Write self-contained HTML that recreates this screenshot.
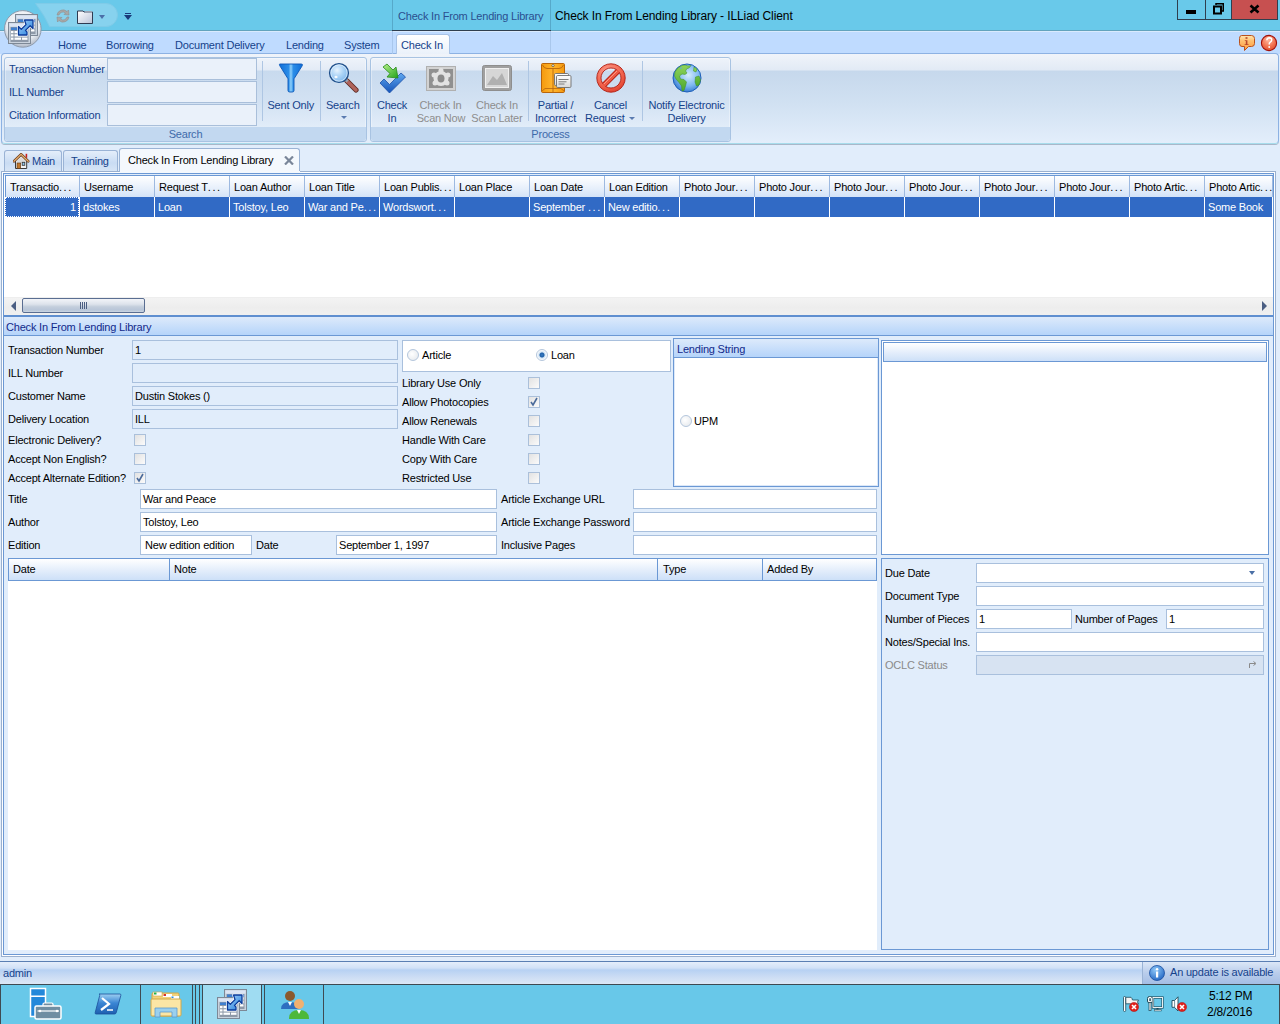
<!DOCTYPE html><html><head><meta charset="utf-8"><style>
*{box-sizing:border-box;margin:0;padding:0}
html,body{width:1280px;height:1024px;overflow:hidden;background:#E1EDFB;font-family:"Liberation Sans",sans-serif;font-size:11px;color:#000}
.a{position:absolute}
.t{position:absolute;white-space:nowrap;letter-spacing:-0.2px;line-height:13px}
.bl{color:#15428B}
.grp{position:absolute;height:85px;border:1px solid #A8C3E2;border-radius:3px;box-shadow:inset 0 0 0 1px rgba(255,255,255,0.35);background:linear-gradient(#EEF3FA 0,#E3EBF6 12px,#C8DAEE 13px,#D3E2F3 45px,#E2EDF9 70px)}
.cap{position:absolute;left:0;right:0;bottom:0;height:14px;background:#C2D8F0;color:#3E6AAA;text-align:center;line-height:15px;border-radius:0 0 3px 3px;letter-spacing:-0.2px}
.sep{position:absolute;width:1px;background:#AEC6E3}
.rin{position:absolute;height:21px;border:1px solid #A9BFDA;background:#EAF1FA}
.big{position:absolute;text-align:center;line-height:13px;color:#15428B;white-space:nowrap;letter-spacing:-0.2px}
.dis{color:#8D8D8D}
.dtab{position:absolute;top:150px;height:21px;border:1px solid #9AB3D5;border-bottom:none;border-radius:3px 3px 0 0;background:linear-gradient(#E4EEFA,#C9DCF3 60%,#D7E5F6)}
.hd{position:absolute;height:21px;border-right:1px solid #9DB9E0;background:linear-gradient(#FFFFFF,#E6EFFB 60%,#D3E3F8)}
.hd span{position:absolute;left:4px;top:5px;white-space:nowrap;letter-spacing:-0.2px;line-height:13px}
.cel{position:absolute;height:20px;border-right:1px solid #fff;background:#316AC5;color:#fff}
.cel span{position:absolute;left:3px;top:4px;white-space:nowrap;letter-spacing:-0.2px;line-height:13px}
.tb{position:absolute;height:20px;border:1px solid #A9C0DD;background:#E1EDFB}
.tw{position:absolute;height:20px;border:1px solid #A9C0DD;background:#fff}
.tb span,.tw span{position:absolute;left:2px;top:3px;white-space:nowrap;letter-spacing:-0.2px;line-height:13px}
.cb{position:absolute;width:12px;height:12px;border:1px solid #ABC0DA;background:linear-gradient(135deg,#E2E2E2,#FBFBFB)}
.rd{position:absolute;width:12px;height:12px;border-radius:50%;border:1px solid #B4C6DC;background:radial-gradient(circle at 40% 40%,#fff,#E2E6EA)}
</style></head><body>
<div class="a" style="left:0px;top:0px;width:1280px;height:31px;background:#69C9EA"></div>
<div class="a" style="left:0px;top:30px;width:1280px;height:1px;background:#62A3BD"></div>
<div class="a" style="left:0px;top:31px;width:1280px;height:23px;background:#BFDBFF"></div>
<div class="a" style="left:0px;top:31px;width:1280px;height:1px;background:#D9EAFD"></div>
<div class="a" style="left:1px;top:53px;width:1278px;height:91px;border:1px solid #8DB2E3;border-bottom-color:#A6DCEB;border-radius:4px;box-shadow:0 1px 0 #A9B7C9;background:linear-gradient(#F0F4FA 0,#E2EAF5 16px,#C6D8EC 17px,#D1E1F2 50px,#E3EEFB 100%)"></div>
<div class="grp" style="left:4px;top:57px;width:363px">
<div class="cap">Search</div></div>
<div class="grp" style="left:370px;top:57px;width:361px">
<div class="cap">Process</div></div>
<div class="a" style="left:1px;top:171px;width:1275px;height:786px;border:1px solid #9AB0CF"></div>
<div class="a" style="left:2px;top:172px;width:1273px;height:784px;border:1px solid #FFFFFF"></div>
<div class="a" style="left:3px;top:173px;width:1271px;height:782px;border:1px solid #6B98D4;background:#E1EDFB"></div>
<div class="a" style="left:4px;top:176px;width:1269px;height:121px;background:#fff"></div>
<div class="a" style="left:5px;top:175px;width:1268px;height:1px;background:#6B98D4"></div>
<div class="a" style="left:5px;top:175px;width:1px;height:22px;background:#6B98D4"></div>
<div class="hd" style="left:6px;top:176px;width:74px"><span>Transactio<i style="font-style:normal;letter-spacing:1.6px">..</i>.</span></div>
<div class="cel" style="left:5px;top:197px;width:74px;border:1px dotted #fff"><span style="left:auto;right:2px;top:3px">1</span></div>
<div class="hd" style="left:80px;top:176px;width:75px"><span>Username</span></div>
<div class="cel" style="left:80px;top:197px;width:75px"><span>dstokes</span></div>
<div class="hd" style="left:155px;top:176px;width:75px"><span>Request T<i style="font-style:normal;letter-spacing:1.6px">..</i>.</span></div>
<div class="cel" style="left:155px;top:197px;width:75px"><span>Loan</span></div>
<div class="hd" style="left:230px;top:176px;width:75px"><span>Loan Author</span></div>
<div class="cel" style="left:230px;top:197px;width:75px"><span>Tolstoy, Leo</span></div>
<div class="hd" style="left:305px;top:176px;width:75px"><span>Loan Title</span></div>
<div class="cel" style="left:305px;top:197px;width:75px"><span>War and Pe<i style="font-style:normal;letter-spacing:1.6px">..</i>.</span></div>
<div class="hd" style="left:380px;top:176px;width:75px"><span>Loan Publis<i style="font-style:normal;letter-spacing:1.6px">..</i>.</span></div>
<div class="cel" style="left:380px;top:197px;width:75px"><span>Wordswort<i style="font-style:normal;letter-spacing:1.6px">..</i>.</span></div>
<div class="hd" style="left:455px;top:176px;width:75px"><span>Loan Place</span></div>
<div class="cel" style="left:455px;top:197px;width:75px"><span></span></div>
<div class="hd" style="left:530px;top:176px;width:75px"><span>Loan Date</span></div>
<div class="cel" style="left:530px;top:197px;width:75px"><span>September <i style="font-style:normal;letter-spacing:1.6px">..</i>.</span></div>
<div class="hd" style="left:605px;top:176px;width:75px"><span>Loan Edition</span></div>
<div class="cel" style="left:605px;top:197px;width:75px"><span>New editio<i style="font-style:normal;letter-spacing:1.6px">..</i>.</span></div>
<div class="hd" style="left:680px;top:176px;width:75px"><span>Photo Jour<i style="font-style:normal;letter-spacing:1.6px">..</i>.</span></div>
<div class="cel" style="left:680px;top:197px;width:75px"><span></span></div>
<div class="hd" style="left:755px;top:176px;width:75px"><span>Photo Jour<i style="font-style:normal;letter-spacing:1.6px">..</i>.</span></div>
<div class="cel" style="left:755px;top:197px;width:75px"><span></span></div>
<div class="hd" style="left:830px;top:176px;width:75px"><span>Photo Jour<i style="font-style:normal;letter-spacing:1.6px">..</i>.</span></div>
<div class="cel" style="left:830px;top:197px;width:75px"><span></span></div>
<div class="hd" style="left:905px;top:176px;width:75px"><span>Photo Jour<i style="font-style:normal;letter-spacing:1.6px">..</i>.</span></div>
<div class="cel" style="left:905px;top:197px;width:75px"><span></span></div>
<div class="hd" style="left:980px;top:176px;width:75px"><span>Photo Jour<i style="font-style:normal;letter-spacing:1.6px">..</i>.</span></div>
<div class="cel" style="left:980px;top:197px;width:75px"><span></span></div>
<div class="hd" style="left:1055px;top:176px;width:75px"><span>Photo Jour<i style="font-style:normal;letter-spacing:1.6px">..</i>.</span></div>
<div class="cel" style="left:1055px;top:197px;width:75px"><span></span></div>
<div class="hd" style="left:1130px;top:176px;width:75px"><span>Photo Artic<i style="font-style:normal;letter-spacing:1.6px">..</i>.</span></div>
<div class="cel" style="left:1130px;top:197px;width:75px"><span></span></div>
<div class="hd" style="left:1205px;top:176px;width:68px"><span>Photo Artic<i style="font-style:normal;letter-spacing:1.6px">..</i>.</span></div>
<div class="cel" style="left:1205px;top:197px;width:68px"><span>Some Book</span></div>
<div class="a" style="left:4px;top:297px;width:1269px;height:18px;background:linear-gradient(#E9E9E9 0,#F3F3F3 1px,#EDEDED 60%,#F0F0F0)"></div>
<div class="a" style="left:22px;top:298px;width:123px;height:15px;border:1px solid #5A6E92;border-radius:2px;background:linear-gradient(#F2F4F8,#DDE3EB 40%,#C3CEDC 60%,#B8C6D8 85%,#CCD6E3)"></div>
<div class="a" style="left:11px;top:301px;width:0;height:0;border-top:5px solid transparent;border-bottom:5px solid transparent;border-right:5px solid #4B5E82"></div>
<div class="a" style="left:1262px;top:301px;width:0;height:0;border-top:5px solid transparent;border-bottom:5px solid transparent;border-left:5px solid #4B5E82"></div>
<div class="a" style="left:80px;top:302px;width:1px;height:7px;background:#4B5E82"></div>
<div class="a" style="left:82px;top:302px;width:1px;height:7px;background:#4B5E82"></div>
<div class="a" style="left:84px;top:302px;width:1px;height:7px;background:#4B5E82"></div>
<div class="a" style="left:86px;top:302px;width:1px;height:7px;background:#4B5E82"></div>
<div class="a" style="left:4px;top:315px;width:1269px;height:2px;background:#5F8FD0"></div>
<div class="a" style="left:4px;top:317px;width:1269px;height:19px;background:linear-gradient(#DDEAFB,#B5D4FA);border-bottom:1px solid #6B98D4"></div>
<div class="t" style="left:6px;top:321px;color:#12298A">Check In From Lending Library</div>
<div class="t" style="left:8px;top:344px;">Transaction Number</div>
<div class="t" style="left:8px;top:367px;">ILL Number</div>
<div class="t" style="left:8px;top:390px;">Customer Name</div>
<div class="t" style="left:8px;top:413px;">Delivery Location</div>
<div class="t" style="left:8px;top:434px;">Electronic Delivery?</div>
<div class="t" style="left:8px;top:453px;">Accept Non English?</div>
<div class="t" style="left:8px;top:472px;">Accept Alternate Edition?</div>
<div class="t" style="left:8px;top:493px;">Title</div>
<div class="t" style="left:8px;top:516px;">Author</div>
<div class="t" style="left:8px;top:539px;">Edition</div>
<div class="tb" style="left:132px;top:340px;width:266px"><span>1</span></div>
<div class="tb" style="left:132px;top:363px;width:266px"><span></span></div>
<div class="tb" style="left:132px;top:386px;width:266px"><span>Dustin Stokes ()</span></div>
<div class="tb" style="left:132px;top:409px;width:266px"><span>ILL</span></div>
<div class="cb" style="left:134px;top:434px"></div>
<div class="cb" style="left:134px;top:453px"></div>
<div class="cb" style="left:134px;top:472px"><svg width="10" height="10" style="position:absolute;left:0;top:0"><path d="M2 5 L4 8 L8 1" stroke="#4A6A9A" stroke-width="1.6" fill="none"/></svg></div>
<div class="a" style="left:402px;top:340px;width:269px;height:32px;border:1px solid #A9C0DD;background:#fff"></div>
<div class="rd" style="left:407px;top:349px"></div>
<div class="t" style="left:422px;top:349px;">Article</div>
<div class="rd" style="left:536px;top:349px;background:radial-gradient(circle,#3B7FC4 0,#1E5FA8 2px,#CFE2F3 3px,#fff 5px)"></div>
<div class="t" style="left:551px;top:349px;">Loan</div>
<div class="t" style="left:402px;top:377px;">Library Use Only</div>
<div class="cb" style="left:528px;top:377px"></div>
<div class="t" style="left:402px;top:396px;">Allow Photocopies</div>
<div class="cb" style="left:528px;top:396px"><svg width="10" height="10" style="position:absolute;left:0;top:0"><path d="M2 5 L4 8 L8 1" stroke="#4A6A9A" stroke-width="1.6" fill="none"/></svg></div>
<div class="t" style="left:402px;top:415px;">Allow Renewals</div>
<div class="cb" style="left:528px;top:415px"></div>
<div class="t" style="left:402px;top:434px;">Handle With Care</div>
<div class="cb" style="left:528px;top:434px"></div>
<div class="t" style="left:402px;top:453px;">Copy With Care</div>
<div class="cb" style="left:528px;top:453px"></div>
<div class="t" style="left:402px;top:472px;">Restricted Use</div>
<div class="cb" style="left:528px;top:472px"></div>
<div class="tw" style="left:140px;top:489px;width:357px"><span>War and Peace</span></div>
<div class="tw" style="left:140px;top:512px;width:357px"><span>Tolstoy, Leo</span></div>
<div class="tw" style="left:140px;top:535px;width:112px"><span style="left:4px">New edition edition</span></div>
<div class="t" style="left:256px;top:539px;">Date</div>
<div class="tw" style="left:336px;top:535px;width:161px"><span>September 1, 1997</span></div>
<div class="t" style="left:501px;top:493px;">Article Exchange URL</div>
<div class="t" style="left:501px;top:516px;">Article Exchange Password</div>
<div class="t" style="left:501px;top:539px;">Inclusive Pages</div>
<div class="tw" style="left:633px;top:489px;width:244px"></div>
<div class="tw" style="left:633px;top:512px;width:244px"></div>
<div class="tw" style="left:633px;top:535px;width:244px"></div>
<div class="a" style="left:673px;top:338px;width:206px;height:149px;border:1px solid #6B98D4;background:#fff"></div>
<div class="a" style="left:674px;top:339px;width:204px;height:19px;background:linear-gradient(#DDEAFB,#B5D4FA);border-bottom:1px solid #6B98D4"></div>
<div class="t" style="left:677px;top:343px;color:#12298A">Lending String</div>
<div class="a" style="left:674px;top:358px;width:204px;height:128px;border:1px solid #DCE8F8;border-top:none"></div>
<div class="rd" style="left:680px;top:415px"></div>
<div class="t" style="left:694px;top:415px;">UPM</div>
<div class="a" style="left:881px;top:340px;width:388px;height:215px;border:1px solid #6B98D4;background:#fff"></div>
<div class="a" style="left:883px;top:342px;width:384px;height:20px;border:1px solid #6B98D4;background:linear-gradient(#FFFFFF,#E3EDFB 55%,#CDE0F8)"></div>
<div class="a" style="left:881px;top:558px;width:388px;height:392px;border:1px solid #6B98D4;background:#E1EDFB"></div>
<div class="t" style="left:885px;top:567px;">Due Date</div>
<div class="t" style="left:885px;top:590px;">Document Type</div>
<div class="t" style="left:885px;top:613px;">Number of Pieces</div>
<div class="t" style="left:1075px;top:613px;">Number of Pages</div>
<div class="t" style="left:885px;top:636px;">Notes/Special Ins.</div>
<div class="t" style="left:885px;top:659px;color:#8A8A8A">OCLC Status</div>
<div class="tw" style="left:976px;top:563px;width:288px"></div>
<div class="a" style="left:1249px;top:571px;width:0;height:0;border-left:3.5px solid transparent;border-right:3.5px solid transparent;border-top:4px solid #4A6FA5"></div>
<div class="tw" style="left:976px;top:586px;width:288px"></div>
<div class="tw" style="left:976px;top:609px;width:96px"><span>1</span></div>
<div class="tw" style="left:1166px;top:609px;width:98px"><span>1</span></div>
<div class="tw" style="left:976px;top:632px;width:288px"></div>
<div class="tw" style="left:976px;top:655px;width:288px;background:#D7E3F2"></div>
<svg class="a" style="left:1248px;top:659px" width="10" height="10" viewBox="0 0 10 10"><path d="M1.5 9 V4.5 H7" stroke="#8A8A8A" stroke-width="1" fill="none"/><path d="M5.5 2.5 L8 4.5 L5.5 6.5" stroke="#8A8A8A" stroke-width="1" fill="none"/></svg>
<div class="a" style="left:8px;top:558px;width:869px;height:392px;background:#fff"></div>
<div class="a" style="left:8px;top:558px;width:869px;height:23px;border:1px solid #6B98D4;background:linear-gradient(#FFFFFF,#E3EDFB 55%,#CDE0F8)"></div>
<div class="a" style="left:169px;top:559px;width:1px;height:21px;background:#6B98D4"></div>
<div class="a" style="left:657px;top:559px;width:1px;height:21px;background:#6B98D4"></div>
<div class="a" style="left:762px;top:559px;width:1px;height:21px;background:#6B98D4"></div>
<div class="t" style="left:13px;top:563px;">Date</div>
<div class="t" style="left:174px;top:563px;">Note</div>
<div class="t" style="left:663px;top:563px;">Type</div>
<div class="t" style="left:767px;top:563px;">Added By</div>
<div class="a" style="left:392px;top:0px;width:159px;height:31px;border-left:1px solid #56A9CA;border-right:1px solid #56A9CA"></div>
<div class="a" style="left:392px;top:30px;width:159px;height:1px;background:#2F3F4F"></div>
<div class="t" style="left:398px;top:10px;color:#2B4F8F">Check In From Lending Library</div>
<div class="t" style="left:555px;top:10px;font-size:12px;letter-spacing:-0.1px;color:#000">Check In From Lending Library - ILLiad Client</div>
<div class="a" style="left:392px;top:31px;width:1px;height:23px;background:#A9C7EC"></div>
<div class="a" style="left:550px;top:31px;width:1px;height:23px;background:#A9C7EC"></div>
<div class="a" style="left:1177px;top:0px;width:101px;height:20px;border:1px solid #2F3F4F;border-top:none;background:#69C9EA"></div>
<div class="a" style="left:1231px;top:0px;width:47px;height:20px;border:1px solid #2F3F4F;border-top:none;background:#C75050"></div>
<div class="a" style="left:1205px;top:0px;width:1px;height:20px;background:#2F3F4F"></div>
<svg class="a" style="left:1177px;top:0px" width="101" height="20" viewBox="0 0 101 20"><rect x="9" y="10" width="10" height="4" fill="#000"/><path d="M39 5 V3.75 H46.25 V11 H45" stroke="#000" stroke-width="1.5" fill="none"/><rect x="37" y="6.5" width="7" height="7" stroke="#000" stroke-width="2" fill="none"/><path d="M73.5 5.5 L81.5 12.5 M81.5 5.5 L73.5 12.5" stroke="#000" stroke-width="2.6"/></svg>
<svg class="a" style="left:30px;top:2px" width="92" height="27" viewBox="0 0 92 27"><path d="M5.5 1.5 H76 A11.5 11.5 0 0 1 76 24.5 H19.5 Q15 14 5.5 1.5 Z" fill="#87D2EE" stroke="#7FCBE8" stroke-width="1"/></svg>
<svg class="a" style="left:0px;top:6px" width="48" height="44" viewBox="0 0 48 44"><defs><linearGradient id="ag" x1="0" y1="0" x2="1" y2="1"><stop offset="0" stop-color="#A8D4FA"/><stop offset="1" stop-color="#1F7BDB"/></linearGradient><radialGradient id="abg" cx="0.5" cy="0.35" r="0.65"><stop offset="0" stop-color="#FFFFFF"/><stop offset="0.7" stop-color="#E6EAF0"/><stop offset="1" stop-color="#AFB8C6"/></radialGradient></defs><circle cx="22.8" cy="22.9" r="18.3" fill="url(#abg)" stroke="#8E9AAB" stroke-width="1"/><g transform="translate(0,0) scale(1.0)"><rect x="15.5" y="8.5" width="22" height="21" fill="#C9D2DD" stroke="#7D8896"/><rect x="16.5" y="9.5" width="20" height="3" fill="#DCE5F5"/><rect x="17.5" y="13" width="18" height="15" fill="#8E99A8"/><rect x="18" y="13.5" width="17" height="2.5" fill="#3E7FD0"/><path d="M18.5 17.5h16M18.5 21h16M18.5 24.5h16" stroke="#fff" stroke-width="2.2"/><rect x="8.5" y="16.5" width="22" height="21" fill="#C9D2DD" stroke="#7D8896"/><rect x="9.5" y="17.5" width="20" height="3" fill="#DCE5F5"/><rect x="10.5" y="21" width="18" height="15" fill="#8E99A8"/><rect x="11" y="21.5" width="17" height="2.5" fill="#3E7FD0"/><g fill="#fff"><rect x="11" y="25" width="2.5" height="2.2"/><rect x="14.5" y="25" width="13" height="2.2"/><rect x="11" y="28.3" width="2.5" height="2.2"/><rect x="14.5" y="28.3" width="13" height="2.2"/><rect x="11" y="31.6" width="2.5" height="2.2"/><rect x="14.5" y="31.6" width="6.5" height="2.2"/><rect x="22" y="31.6" width="5.5" height="2.2"/></g><path id="arw" d="M24.5 14 H33 V22.5 L30.2 19.7 L25.5 24.4 L27 26 V29 H18.5 V20.5 L21.3 23.3 L26 18.6 Z" fill="#fff" stroke="#fff" stroke-width="2.6" stroke-linejoin="round"/><path d="M24.5 14 H33 V22.5 L30.2 19.7 L25.5 24.4 L27 26 V29 H18.5 V20.5 L21.3 23.3 L26 18.6 Z" fill="url(#ag)" stroke="#0A3A9A" stroke-width="1.3" stroke-linejoin="round"/></g></svg>
<svg class="a" style="left:55px;top:8px" width="16" height="16" viewBox="0 0 16 16"><path d="M2 7 A6 6 0 0 1 12 3.5 L13.5 2 L14 7 L9 6.5 L10.5 5 A4 4 0 0 0 4 7 Z" fill="#A8A8A8" stroke="#8E8E8E" stroke-width="0.6"/><path d="M14 9 A6 6 0 0 1 4 12.5 L2.5 14 L2 9 L7 9.5 L5.5 11 A4 4 0 0 0 12 9 Z" fill="#A8A8A8" stroke="#8E8E8E" stroke-width="0.6"/></svg>
<svg class="a" style="left:77px;top:10px" width="17" height="14" viewBox="0 0 17 14"><path d="M0.5 1 H6 L7 2 H15.5 V13.5 H0.5 Z" fill="url(#fg)" stroke="#2F3B52" stroke-width="1"/><defs><linearGradient id="fg" x1="0" y1="0" x2="1" y2="1"><stop offset="0" stop-color="#FFFFFF"/><stop offset="1" stop-color="#B9C3D8"/></linearGradient></defs><rect x="8" y="1" width="7" height="2" fill="#9AA4B4"/></svg>
<div class="a" style="left:99px;top:15px;width:0;height:0;border-left:3px solid transparent;border-right:3px solid transparent;border-top:4px solid #4B6FA8"></div>
<div class="a" style="left:125px;top:13px;width:6px;height:1px;background:#1A3A7A"></div>
<div class="a" style="left:124px;top:15px;width:0;height:0;border-left:4px solid transparent;border-right:4px solid transparent;border-top:5px solid #1A3A7A"></div>
<div class="t bl" style="left:58px;top:39px;">Home</div>
<div class="t bl" style="left:106px;top:39px;">Borrowing</div>
<div class="t bl" style="left:175px;top:39px;">Document Delivery</div>
<div class="t bl" style="left:286px;top:39px;">Lending</div>
<div class="t bl" style="left:344px;top:39px;">System</div>
<div class="a" style="left:396px;top:34px;width:54px;height:20px;border:1px solid #A9C3E6;border-bottom:none;border-radius:3px 3px 0 0;background:linear-gradient(#FFFFFF,#EAF1FA)"></div>
<div class="t bl" style="left:401px;top:39px;">Check In</div>
<svg class="a" style="left:1238px;top:34px" width="18" height="18" viewBox="0 0 18 18"><defs><linearGradient id="ibg" x1="0" y1="0" x2="0" y2="1"><stop offset="0" stop-color="#FFE6B0"/><stop offset="0.35" stop-color="#FFC070"/><stop offset="1" stop-color="#FF9A3A"/></linearGradient></defs><path d="M3.5 1.5 H13.5 Q16.5 1.5 16.5 4.5 V9.5 Q16.5 12.5 13.5 12.5 H10.5 L6.5 16.5 V12.5 H4 Q1.5 12.5 1.5 9.5 V4.5 Q1.5 1.5 3.5 1.5 Z" fill="url(#ibg)" stroke="#B9501C" stroke-width="1"/><rect x="7.5" y="3.2" width="2" height="1.6" fill="#B9482A"/><path d="M6.8 6.3 H9.4 V10.2 H10.6 V11 H6.6 V10.2 H7.8 V7 H6.8 Z" fill="#B9482A"/></svg>
<svg class="a" style="left:1260px;top:34px" width="18" height="18" viewBox="0 0 18 18"><defs><radialGradient id="hbg" cx="0.45" cy="0.3" r="0.75"><stop offset="0" stop-color="#FFB8A0"/><stop offset="0.6" stop-color="#F2704E"/><stop offset="1" stop-color="#E04A2A"/></radialGradient></defs><circle cx="9" cy="9" r="7.6" fill="url(#hbg)" stroke="#A0100A" stroke-width="1.1"/><path d="M6.8 6.2 Q7 3.8 9.4 3.8 Q11.8 3.9 11.7 6 Q11.6 7.5 10 8.3 Q9.2 8.8 9.2 10.6" stroke="#fff" stroke-width="1.5" fill="none"/><circle cx="9.2" cy="13" r="0.9" fill="#fff"/></svg>
<div class="t bl" style="left:9px;top:63px;">Transaction Number</div>
<div class="t bl" style="left:9px;top:86px;">ILL Number</div>
<div class="t bl" style="left:9px;top:109px;">Citation Information</div>
<div class="a" style="left:107px;top:58px;width:150px;height:22px;border:1px solid #A9BFDA;background:#EAF1FA"></div>
<div class="a" style="left:107px;top:81px;width:150px;height:22px;border:1px solid #A9BFDA;background:#EAF1FA"></div>
<div class="a" style="left:107px;top:104px;width:150px;height:22px;border:1px solid #A9BFDA;background:#EAF1FA"></div>
<div class="a" style="left:262px;top:61px;width:1px;height:60px;background:#AEC6E3"></div>
<div class="a" style="left:320px;top:61px;width:1px;height:60px;background:#AEC6E3"></div>
<div class="t bl" style="left:230.75px;top:99px;width:120px;text-align:center">Sent Only</div>
<div class="t bl" style="left:282.75px;top:99px;width:120px;text-align:center">Search</div>
<div class="a" style="left:341px;top:116px;width:0;height:0;border-left:3px solid transparent;border-right:3px solid transparent;border-top:3px solid #5A7BB0"></div>
<svg class="a" style="left:278px;top:63px" width="26" height="30" viewBox="0 0 26 30"><defs><linearGradient id="fun" x1="0" x2="1"><stop offset="0" stop-color="#0F6ED8"/><stop offset="0.4" stop-color="#2B8DE8"/><stop offset="0.5" stop-color="#8FD0FA"/><stop offset="0.6" stop-color="#2B8DE8"/><stop offset="1" stop-color="#0F6ED8"/></linearGradient></defs><path d="M1.8 1 H23.2 Q25 1 24.3 2.6 L16 15.8 V27.5 Q16 29 14.3 29 H11.7 Q10 29 10 27.5 V15.8 L1.7 2.6 Q1 1 1.8 1 Z" fill="url(#fun)" stroke="#0B56B5" stroke-width="0.9"/></svg>
<svg class="a" style="left:328px;top:62px" width="31" height="31" viewBox="0 0 31 31"><defs><radialGradient id="lens" cx="0.4" cy="0.35" r="0.7"><stop offset="0" stop-color="#E8F4FE"/><stop offset="0.5" stop-color="#A9D2F6"/><stop offset="1" stop-color="#7DB6EC"/></radialGradient><linearGradient id="hdl" x1="0" y1="0" x2="1" y2="0"><stop offset="0" stop-color="#C9807A"/><stop offset="1" stop-color="#8A3F36"/></linearGradient></defs><path d="M19 19 L28 28" stroke="#5E2A22" stroke-width="5.2" stroke-linecap="round"/><path d="M19 19 L28 28" stroke="#B0645C" stroke-width="3.4" stroke-linecap="round"/><path d="M17.5 17.5 L19.5 19.5" stroke="#9AA6B4" stroke-width="3"/><circle cx="11" cy="11" r="9.4" fill="url(#lens)" stroke="#1F4F8A" stroke-width="1.4"/><circle cx="11" cy="11" r="8.2" fill="none" stroke="#fff" stroke-width="0.8" opacity="0.7"/><ellipse cx="8" cy="15" rx="1.6" ry="1.2" fill="#fff" opacity="0.9"/></svg>
<div class="a" style="left:528px;top:61px;width:1px;height:60px;background:#AEC6E3"></div>
<div class="a" style="left:642px;top:61px;width:1px;height:60px;background:#AEC6E3"></div>
<div class="t bl" style="left:332px;top:99px;width:120px;text-align:center">Check</div>
<div class="t bl" style="left:332px;top:112px;width:120px;text-align:center">In</div>
<div class="t dis" style="left:380.5px;top:99px;width:120px;text-align:center">Check In</div>
<div class="t dis" style="left:381px;top:112px;width:120px;text-align:center">Scan Now</div>
<div class="t dis" style="left:436.9px;top:99px;width:120px;text-align:center">Check In</div>
<div class="t dis" style="left:436.9px;top:112px;width:120px;text-align:center">Scan Later</div>
<div class="t bl" style="left:495.5px;top:99px;width:120px;text-align:center">Partial /</div>
<div class="t bl" style="left:495.5px;top:112px;width:120px;text-align:center">Incorrect</div>
<div class="t bl" style="left:550.5px;top:99px;width:120px;text-align:center">Cancel</div>
<div class="t bl" style="left:585px;top:112px;">Request</div>
<div class="a" style="left:629px;top:117px;width:0;height:0;border-left:3px solid transparent;border-right:3px solid transparent;border-top:3px solid #5A7BB0"></div>
<div class="t bl" style="left:626.5px;top:99px;width:120px;text-align:center">Notify Electronic</div>
<div class="t bl" style="left:626.5px;top:112px;width:120px;text-align:center">Delivery</div>
<svg class="a" style="left:379px;top:63px" width="28" height="31" viewBox="0 0 28 31"><defs><linearGradient id="chk" x1="0" y1="0" x2="0" y2="1"><stop offset="0" stop-color="#5FA8F0"/><stop offset="1" stop-color="#1553B8"/></linearGradient><linearGradient id="arr" x1="0" y1="0" x2="1" y2="1"><stop offset="0" stop-color="#B8F08A"/><stop offset="1" stop-color="#22A31A"/></linearGradient></defs><path d="M1 20 L5 16 L10.5 21.5 L22 10 L26.5 14 L10.5 30 Z" fill="url(#chk)" stroke="#1A4FA8" stroke-width="0.8" stroke-linejoin="round"/><path d="M4 4 L8 1 L14 7 L17 4 L19 15 L8 14 L11 10.5 Z" fill="url(#arr)" stroke="#2A8A1A" stroke-width="0.8" stroke-linejoin="round"/></svg>
<svg class="a" style="left:426px;top:66px" width="30" height="25" viewBox="0 0 30 25"><rect x="0.5" y="0.5" width="29" height="24" fill="#D2D2D2" stroke="#B0B0B0"/><rect x="3" y="3" width="24" height="19" fill="#909090"/><g fill="#E2E2E2"><circle cx="15" cy="12.5" r="7.5"/><circle cx="8" cy="9" r="2.5"/><circle cx="22" cy="9" r="2.5"/><circle cx="9" cy="17" r="2.5"/><circle cx="21" cy="17" r="2.5"/><circle cx="15" cy="4.5" r="2.5"/></g><ellipse cx="15" cy="12.5" rx="3.5" ry="4" fill="#8A8A8A"/></svg>
<svg class="a" style="left:482px;top:65px" width="30" height="26" viewBox="0 0 30 26"><rect x="0.5" y="0.5" width="29" height="25" rx="2" fill="#A0A0A0" stroke="#8E8E8E"/><rect x="3.5" y="3.5" width="23" height="19" fill="#D6D6D6" stroke="#F0F0F0"/><path d="M5 20 L11 11 L15 15 L20 8 L25 20 Z" fill="#B0B0B0"/></svg>
<svg class="a" style="left:541px;top:63px" width="31" height="30" viewBox="0 0 31 30"><defs><linearGradient id="env" x1="0" x2="1"><stop offset="0" stop-color="#F59A0E"/><stop offset="0.5" stop-color="#FFB52E"/><stop offset="1" stop-color="#F5990E"/></linearGradient><linearGradient id="crd" x1="0" y1="0" x2="0" y2="1"><stop offset="0" stop-color="#FFFFFF"/><stop offset="1" stop-color="#D8D8D8"/></linearGradient></defs><rect x="0.5" y="0.5" width="23" height="29" rx="1.2" fill="url(#env)" stroke="#B8650C"/><path d="M1.5 2 Q3 5.5 6 5.5 H18 Q21 5.5 22.5 2" stroke="#B8650C" fill="none" stroke-width="0.9"/><path d="M12 5.5 V29" stroke="#B8650C" stroke-width="0.9"/><path d="M1 28 L4 25.5 H20 L23 28" stroke="#B8650C" fill="none" stroke-width="0.8"/><circle cx="12" cy="2.6" r="1.1" fill="#fff" stroke="#333" stroke-width="0.6"/><rect x="13.5" y="10.5" width="14" height="12" rx="1.2" fill="url(#crd)" stroke="#6E6E6E" stroke-width="0.9"/><rect x="15.5" y="12.5" width="14.5" height="12" rx="1.2" fill="url(#crd)" stroke="#6E6E6E" stroke-width="0.9"/><path d="M17.5 16.5h10M17.5 18.8h8M17.5 21h6" stroke="#707070" stroke-width="0.9"/></svg>
<svg class="a" style="left:596px;top:63px" width="30" height="30" viewBox="0 0 30 30"><defs><radialGradient id="cn" cx="0.4" cy="0.3" r="0.85"><stop offset="0" stop-color="#FFA090"/><stop offset="0.6" stop-color="#F0604A"/><stop offset="1" stop-color="#D63020"/></radialGradient></defs><path d="M15 0.8 A14.2 14.2 0 1 0 15.01 0.8 Z M15 5 A10 10 0 1 1 14.99 5 Z" fill="url(#cn)" fill-rule="evenodd" stroke="#B01E12" stroke-width="0.9"/><path d="M22 8 L8 22" stroke="#B01E12" stroke-width="5.4"/><path d="M22.3 7.7 L7.7 22.3" stroke="#EE5A44" stroke-width="3.8"/><path d="M21 8 L8 21" stroke="#FFA696" stroke-width="1" opacity="0.8"/></svg>
<svg class="a" style="left:672px;top:63px" width="30" height="30" viewBox="0 0 30 30"><defs><radialGradient id="gl" cx="0.55" cy="0.4" r="0.65"><stop offset="0" stop-color="#D5ECFC"/><stop offset="0.6" stop-color="#7BB6F0"/><stop offset="1" stop-color="#2E72CC"/></radialGradient><linearGradient id="lnd" x1="0" y1="0" x2="0" y2="1"><stop offset="0" stop-color="#8ED45A"/><stop offset="1" stop-color="#4EA82E"/></linearGradient></defs><circle cx="15" cy="15" r="14" fill="url(#gl)" stroke="#1E5FB8" stroke-width="1"/><path d="M3 9 Q5 4.5 10 2.5 L13 2 L16 3 L19 2.5 L17 5 L15 5.5 L13.5 8 L15 10 L13 11.5 L10 11 L7.5 13 L8.5 16 L12 16.5 L14.5 19 L13.5 23 L12 27.5 L10 28 L9.5 23 L7 19.5 L4 16 L2.5 13 Z" fill="url(#lnd)" stroke="#3E8E22" stroke-width="0.5"/><path d="M22 4 L25 6 L24 9 L21.5 8 Z M23.5 14 L27 13 L28.5 17 L27 22 L24.5 23 L23 19 Z" fill="url(#lnd)" stroke="#3E8E22" stroke-width="0.5"/><path d="M8 5 L10 4 L9 6.5 Z" fill="#5AA8E8"/></svg>
<div class="dtab" style="left:4px;width:58px"></div>
<div class="dtab" style="left:63px;width:55px"></div>
<div class="a" style="left:119px;top:148px;width:181px;height:24px;background:#F4F8FD;border:1px solid #9AB3D5;border-bottom:none;border-radius:3px 3px 0 0"></div>
<div class="a" style="left:120px;top:171px;width:180px;height:2px;background:#F4F8FD"></div>
<div class="t bl" style="left:32px;top:155px;">Main</div>
<div class="t bl" style="left:71px;top:155px;">Training</div>
<div class="t" style="left:128px;top:154px;">Check In From Lending Library</div>
<svg class="a" style="left:284px;top:156px" width="10" height="9" viewBox="0 0 10 9"><path d="M1 0.5 L9 8.5 M9 0.5 L1 8.5" stroke="#7A8699" stroke-width="2.2"/></svg>
<svg class="a" style="left:13px;top:153px" width="17" height="17" viewBox="0 0 17 17"><rect x="12.6" y="0.8" width="1.6" height="4" fill="#C82020"/><path d="M2.5 7 L8.1 2.5 L13.7 7 V15.5 H2.5 Z" fill="#F2F2F2" stroke="#3A3A3A" stroke-width="1"/><path d="M3.5 8 L8.1 4 L12.7 8 V10 H3.5 Z" fill="#DADADA"/><rect x="4" y="10" width="3.7" height="5.5" fill="#C0782E" stroke="#5A3210" stroke-width="0.6"/><rect x="9.2" y="9.3" width="2.6" height="3" fill="#8EC8F0" stroke="#333" stroke-width="0.8"/><path d="M1 8.3 L8.1 1.3 L15.2 8.3" stroke="#6A3A1A" stroke-width="2.6" fill="none" stroke-linecap="round"/><path d="M1 8.3 L8.1 1.3 L15.2 8.3" stroke="#E8B070" stroke-width="1.2" fill="none" stroke-linecap="round"/></svg>
<div class="a" style="left:0px;top:957px;width:1280px;height:4px;background:#E1EDFB"></div>
<div class="a" style="left:0px;top:961px;width:1280px;height:1px;background:#5B7FB3"></div>
<div class="a" style="left:0px;top:962px;width:1280px;height:22px;background:linear-gradient(#E5EEFB 0,#D1E1F7 6px,#B7D1F3 8px,#C9DBF4 14px,#DDE8F6 100%)"></div>
<div class="t bl" style="left:3px;top:967px;">admin</div>
<div class="a" style="left:1142px;top:962px;width:138px;height:22px;border-left:1px solid #9AB3D5;background:linear-gradient(#DCE7F7,#B9CDEB 50%,#A5BEE5)"></div>
<svg class="a" style="left:1149px;top:965px" width="16" height="16" viewBox="0 0 16 16"><defs><radialGradient id="ii" cx="0.4" cy="0.3" r="0.8"><stop offset="0" stop-color="#8FC8F8"/><stop offset="1" stop-color="#1A5FC0"/></radialGradient></defs><circle cx="8" cy="8" r="7.5" fill="url(#ii)" stroke="#1A4F9F" stroke-width="0.8"/><rect x="7" y="6.5" width="2.2" height="6" fill="#fff"/><circle cx="8.1" cy="4.2" r="1.2" fill="#fff"/></svg>
<div class="t bl" style="left:1170px;top:966px;">An update is available</div>
<div class="a" style="left:0px;top:984px;width:1280px;height:40px;background:#68C8E9;border-top:1px solid #3F4A52;border-left:1px solid #3F4A52;border-right:1px solid #3F4A52"></div>
<div class="a" style="left:203px;top:985px;width:58px;height:39px;background:#9FDCF2"></div>
<div class="a" style="left:140px;top:985px;width:1px;height:39px;background:#3F4A52"></div>
<div class="a" style="left:192px;top:985px;width:1px;height:39px;background:#3F4A52"></div>
<div class="a" style="left:195px;top:985px;width:1px;height:39px;background:#3F4A52"></div>
<div class="a" style="left:199px;top:985px;width:1px;height:39px;background:#3F4A52"></div>
<div class="a" style="left:202px;top:985px;width:1px;height:39px;background:#3F4A52"></div>
<div class="a" style="left:261px;top:985px;width:1px;height:39px;background:#3F4A52"></div>
<div class="a" style="left:264px;top:985px;width:1px;height:39px;background:#3F4A52"></div>
<div class="a" style="left:323px;top:985px;width:1px;height:39px;background:#3F4A52"></div>
<svg class="a" style="left:29px;top:987px" width="34" height="34" viewBox="0 0 34 34"><rect x="1.5" y="1.5" width="15" height="28" fill="#2388DA" stroke="#fff" stroke-width="1.5"/><rect x="1.5" y="8.5" width="15" height="1.5" fill="#fff"/><rect x="14" y="16" width="10" height="4" rx="1.2" fill="#6F8EA2" stroke="#fff" stroke-width="1.2"/><rect x="6" y="19" width="26" height="13" rx="1.5" fill="#6F8EA2" stroke="#fff" stroke-width="1.5"/><path d="M8.5 24 H30" stroke="#fff" stroke-width="1.2"/><circle cx="11" cy="24" r="1.3" fill="#fff"/><circle cx="28" cy="24" r="1.3" fill="#fff"/></svg>
<svg class="a" style="left:94px;top:993px" width="28" height="22" viewBox="0 0 28 22"><defs><linearGradient id="psg" x1="0" y1="0" x2="0" y2="1"><stop offset="0" stop-color="#9ED0F2"/><stop offset="0.45" stop-color="#3A86D4"/><stop offset="1" stop-color="#1E5FB0"/></linearGradient></defs><path d="M5 1 H26 Q27.2 1 26.8 2.5 L22.3 19.5 Q21.9 21 20.5 21 H2 Q0.8 21 1.2 19.5 L5.7 2.5 Q6 1 5 1 Z" fill="url(#psg)" stroke="#1B4F9A" stroke-width="0.8"/><path d="M8 5 L15 11 L7 17" stroke="#fff" stroke-width="2.2" fill="none"/><path d="M13 17 H19" stroke="#fff" stroke-width="1.5"/></svg>
<svg class="a" style="left:150px;top:990px" width="32" height="30" viewBox="0 0 32 30"><rect x="2" y="3" width="27" height="23" rx="1" fill="#F2D27A" stroke="#D2A848"/><rect x="3" y="2" width="9" height="4" fill="#fff" stroke="#D2A848" stroke-width="0.6"/><rect x="4" y="2.5" width="2.5" height="2" fill="#22B04B"/><rect x="13" y="4" width="9" height="3" fill="#fff"/><rect x="13.5" y="4" width="2.5" height="2" fill="#D8322A"/><rect x="21" y="6" width="8" height="3" fill="#fff"/><rect x="21.5" y="6.5" width="2" height="1.5" fill="#2A8AD8"/><rect x="1" y="9" width="30" height="17" rx="1" fill="#FBE6A5" stroke="#D2A848"/><path d="M5 27 V18 H27 V27 H22 V22 H10 V27 Z" fill="#9AD0EE" stroke="#5A9ACF" stroke-width="0.8"/></svg>
<svg class="a" style="left:209px;top:981px" width="46" height="44" viewBox="0 0 46 44"><defs><linearGradient id="ag2" x1="0" y1="0" x2="1" y2="1"><stop offset="0" stop-color="#A8D4FA"/><stop offset="1" stop-color="#1F7BDB"/></linearGradient></defs><g transform="translate(0,0) scale(1.0)"><rect x="15.5" y="8.5" width="22" height="21" fill="#C9D2DD" stroke="#7D8896"/><rect x="16.5" y="9.5" width="20" height="3" fill="#DCE5F5"/><rect x="17.5" y="13" width="18" height="15" fill="#8E99A8"/><rect x="18" y="13.5" width="17" height="2.5" fill="#3E7FD0"/><path d="M18.5 17.5h16M18.5 21h16M18.5 24.5h16" stroke="#fff" stroke-width="2.2"/><rect x="8.5" y="16.5" width="22" height="21" fill="#C9D2DD" stroke="#7D8896"/><rect x="9.5" y="17.5" width="20" height="3" fill="#DCE5F5"/><rect x="10.5" y="21" width="18" height="15" fill="#8E99A8"/><rect x="11" y="21.5" width="17" height="2.5" fill="#3E7FD0"/><g fill="#fff"><rect x="11" y="25" width="2.5" height="2.2"/><rect x="14.5" y="25" width="13" height="2.2"/><rect x="11" y="28.3" width="2.5" height="2.2"/><rect x="14.5" y="28.3" width="13" height="2.2"/><rect x="11" y="31.6" width="2.5" height="2.2"/><rect x="14.5" y="31.6" width="6.5" height="2.2"/><rect x="22" y="31.6" width="5.5" height="2.2"/></g><path id="arw" d="M24.5 14 H33 V22.5 L30.2 19.7 L25.5 24.4 L27 26 V29 H18.5 V20.5 L21.3 23.3 L26 18.6 Z" fill="#fff" stroke="#fff" stroke-width="2.6" stroke-linejoin="round"/><path d="M24.5 14 H33 V22.5 L30.2 19.7 L25.5 24.4 L27 26 V29 H18.5 V20.5 L21.3 23.3 L26 18.6 Z" fill="url(#ag2)" stroke="#0A3A9A" stroke-width="1.3" stroke-linejoin="round"/></g></svg>
<svg class="a" style="left:278px;top:988px" width="32" height="32" viewBox="0 0 32 32"><circle cx="12" cy="8" r="5" fill="#8A5A2E"/><path d="M3 21 Q3 14 12 14 Q21 14 21 21 Z" fill="#2E6FC0"/><path d="M10 14 L12 18 L14 14 Z" fill="#fff"/><circle cx="21" cy="16" r="5" fill="#F0B070"/><path d="M11 31 Q11 22 21 22 Q31 22 31 31 Z" fill="#4DB83A"/><path d="M19 22 L21 26 L23 22 Z" fill="#fff"/></svg>
<svg class="a" style="left:1118px;top:990px" width="80" height="30" viewBox="0 0 80 30"><rect x="5.5" y="6.5" width="2.2" height="15" rx="1" fill="#fff" stroke="#1E4A5A" stroke-width="0.8"/><path d="M7.8 7.3 H13 Q14 8 14.5 10 H20.5 L19.5 12 L20.5 14 H14 Q13.5 14 12.8 13.8 H7.8 Z" fill="#F4F4F4" stroke="#1E4A5A" stroke-width="0.8"/><circle cx="16" cy="17" r="4.6" fill="#E0201A" stroke="#B01010" stroke-width="0.5"/><path d="M14 15 L18 19 M18 15 L14 19" stroke="#fff" stroke-width="1.6"/><rect x="29.5" y="6.5" width="5" height="6.5" rx="2" fill="#fff" stroke="#1E4A5A" stroke-width="1"/><rect x="31.3" y="8.3" width="1.5" height="2.8" fill="#1E4A5A"/><rect x="31" y="12.5" width="2" height="8" fill="#fff" stroke="#1E4A5A" stroke-width="0.8"/><rect x="35" y="7.5" width="9.5" height="10" fill="none" stroke="#1E4A5A" stroke-width="2.2"/><rect x="35" y="7.5" width="9.5" height="10" fill="none" stroke="#fff" stroke-width="0.9"/><path d="M39.5 18 V19.5 M36 20.3 H43.5" stroke="#1E4A5A" stroke-width="2"/><path d="M36.5 20.3 H43" stroke="#fff" stroke-width="0.8"/><path d="M54 10.5 H56.5 L60 6.8 V21 L56.5 17.3 H54 Z" fill="#fff" stroke="#1E4A5A" stroke-width="0.9"/><path d="M56.6 10.5 V17.3" stroke="#1E4A5A" stroke-width="0.6"/><circle cx="64" cy="17" r="4.6" fill="#E0201A" stroke="#B01010" stroke-width="0.5"/><path d="M62 15 L66 19 M66 15 L62 19" stroke="#fff" stroke-width="1.6"/></svg>
<div class="t" style="left:1209px;top:990px;font-size:12px;color:#000">5:12 PM</div>
<div class="t" style="left:1207px;top:1006px;font-size:12px;color:#000">2/8/2016</div>
</body></html>
